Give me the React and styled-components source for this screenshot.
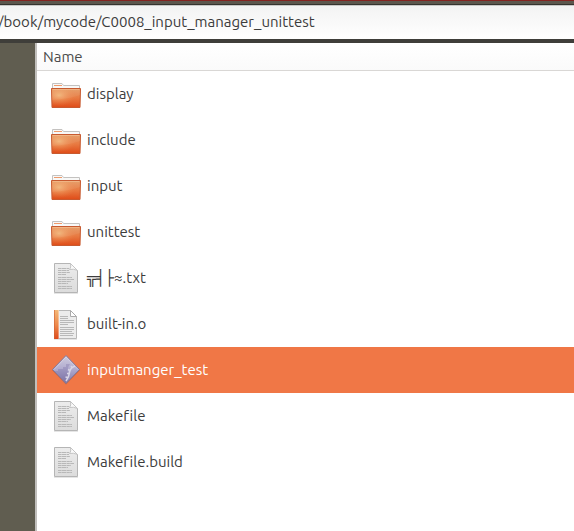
import React, { useState } from 'react';
import styled, { createGlobalStyle } from 'styled-components';

const files = [
  { name: 'display', kind: 'folder' },
  { name: 'include', kind: 'folder' },
  { name: 'input', kind: 'folder' },
  { name: 'unittest', kind: 'folder' },
  { name: '╦╡├≈.txt', kind: 'text' },
  { name: 'built-in.o', kind: 'object' },
  { name: 'inputmanger_test', kind: 'program' },
  { name: 'Makefile', kind: 'text' },
  { name: 'Makefile.build', kind: 'text' },
];

const GlobalStyle = createGlobalStyle`
  * {
    box-sizing: border-box;
  }

  body {
    margin: 0;
    background: #fff;
    color: #3c3c3c;
    font-family: 'Ubuntu', 'Noto Sans', 'DejaVu Sans', sans-serif;
    font-size: 15px;
    font-variant-ligatures: none;
  }
`;

const Window = styled.div`
  display: flex;
  flex-direction: column;
  min-height: 100vh;
`;

const TitleEdge = styled.div`
  height: 5px;
  background: linear-gradient(#84231f 0 1px, #5c574d 1px 4px, #35342f 4px);
`;

const PathBar = styled.div`
  border-bottom: 4px solid #3f3e3a;
`;

const PathInput = styled.input`
  display: block;
  width: 100%;
  height: 34px;
  padding: 0 0 2px;
  border: 0;
  border-top: 1px solid #c9c8c6;
  outline: 0;
  background: linear-gradient(#f3f3f3, #fff);
  color: inherit;
  font: inherit;
  text-indent: -2px;
`;

const Body = styled.div`
  display: flex;
  flex: 1;
`;

const Sidebar = styled.aside`
  flex: 0 0 35px;
  background: #605d50;
`;

const Content = styled.main`
  flex: 1;
  min-width: 0;
  border-left: 2px solid #c1bfbc;
`;

const Table = styled.table`
  width: 100%;
  border-spacing: 0;
`;

const HeadCell = styled.th`
  height: 28px;
  padding: 0 6px;
  border-bottom: 1px solid #d9d7d5;
  background: linear-gradient(#fff, #fafafa);
  color: #4c4c4c;
  font-weight: 400;
  text-align: left;
`;

const Row = styled.tr`
  background: ${({ $selected }) => ($selected ? '#f07746' : '#fff')};
  color: ${({ $selected }) => ($selected ? '#fff' : 'inherit')};
  cursor: default;
`;

const Cell = styled.td`
  height: 46px;
  padding: 0 13px;
`;

const Entry = styled.div`
  display: flex;
  align-items: center;
  gap: 5px;
  line-height: 20px;
  white-space: nowrap;

  svg {
    flex: none;
  }
`;

const FolderIcon = () => (
  <svg width="32" height="32" viewBox="0 0 32 32" aria-hidden="true">
    <defs>
      <linearGradient id="folder" x1="0" y1="0" x2="0" y2="1">
        <stop offset="0" stopColor="#e59a62" />
        <stop offset=".5" stopColor="#e87a42" />
        <stop offset="1" stopColor="#df4c18" />
      </linearGradient>
      <radialGradient id="folderGlow" cx=".25" cy=".35" r=".6">
        <stop offset="0" stopColor="#f6c98c" stopOpacity=".7" />
        <stop offset="1" stopColor="#f08a4c" stopOpacity="0" />
      </radialGradient>
    </defs>
    <path d="M2.500 11V5.500h9.500l1.500 2h16V11z" fill="#f8f8f7" stroke="#c4c2c0" />
    <path d="M4 7.500h8" stroke="#ee9a6c" />
    <path d="M1.500 10.500h29l-.5 19H2z" fill="url(#folder)" stroke="#c75a30" />
    <path d="M2 11h28l-.5 18H2.500z" fill="url(#folderGlow)" />
    <path d="M2.500 11.500h27" stroke="#f5c79c" strokeOpacity=".6" />
    <path d="M2 12h28v5q-10 4-28 5z" fill="#fff" fillOpacity=".06" />
  </svg>
);

const TextIcon = () => (
  <svg width="32" height="32" viewBox="0 0 32 32" aria-hidden="true">
    <defs>
      <linearGradient id="paper" x1="0" y1="0" x2="0" y2="1">
        <stop offset="0" stopColor="#ececec" />
        <stop offset="1" stopColor="#dcdcdc" />
      </linearGradient>
    </defs>
    <path d="M4 31.500h24" stroke="#000" strokeOpacity=".1" />
    <path d="M4.500 1.500h16l7 7v22h-23z" fill="url(#paper)" stroke="#b5b5b5" />
    <path d="M20.500 1.500q1 4-1 6 4-1 8 1z" fill="#fafafa" stroke="#c4c4c4" />
    <path
      d="M8 6.500h11M8 8.500h11M8 10.500h12M8 12.500h8M8 15.500h14M8 17.500h16M8 19.500h13M8 21.500h10M8 24.500h14M8 26.500h14"
      stroke="#b8b8b8"
      strokeDasharray="3 .4 5 .4"
    />
  </svg>
);

const ObjectIcon = () => (
  <svg width="32" height="32" viewBox="0 0 32 32" aria-hidden="true">
    <defs>
      <linearGradient id="spine" x1="0" y1="0" x2="0" y2="1">
        <stop offset="0" stopColor="#f3b878" />
        <stop offset=".5" stopColor="#ee8a4c" />
        <stop offset="1" stopColor="#dd4a1c" />
      </linearGradient>
    </defs>
    <path d="M4 31.500h23" stroke="#000" strokeOpacity=".1" />
    <path d="M8.500 2.500h12l6 6v22h-18z" fill="#ececec" stroke="#b8b8b8" />
    <path d="M20.500 2.500v6h6z" fill="#fff" stroke="#aaa" />
    <path d="M4 2h5v29H4z" fill="url(#spine)" />
    <path d="M4.500 2v29" stroke="#cf6235" strokeOpacity=".6" />
    <path d="M8.500 2v29" stroke="#fff" strokeOpacity=".35" />
    <path
      d="M10 8.500h8M10 10.500h8M10 12.500h14M10 14.500h14M10 16.500h8M10 19.500h14M10 21.500h14M10 23.500h12M10 25.500h14M10 27.500h13"
      stroke="#b8b8b8"
    />
  </svg>
);

const ProgramIcon = () => (
  <svg width="32" height="32" viewBox="0 0 32 32" aria-hidden="true">
    <defs>
      <linearGradient id="gem" x1="0" y1="0" x2="0" y2="1">
        <stop offset="0" stopColor="#cfccde" />
        <stop offset=".45" stopColor="#b3aed0" />
        <stop offset="1" stopColor="#8279aa" />
      </linearGradient>
      <clipPath id="gemClip">
        <path d="M16 2.500L29 15.500 16 28.500 3 15.500z" />
      </clipPath>
    </defs>
    <path d="M16 3.500L30 16 16 30.500 2 16z" fill="#8c3c28" fillOpacity=".35" />
    <path
      d="M16 1.500L29.500 15.500 16 29.500 2.500 15.500z"
      fill="url(#gem)"
      stroke="#81799d"
      strokeLinejoin="round"
    />
    <g clipPath="url(#gemClip)">
      <path d="M3 17h5v-2h5v-2h3v-3h4q-3 4-2 8t-3 11z" fill="#6a6299" fillOpacity=".28" />
      <path d="M25 12q-5 2-5.500 6.500T16 27" fill="none" stroke="#d6d3e5" strokeWidth="1.600" />
      <path
        d="M21 12l1.200 2M18 15.500l2 1M17 19.500h2.500M15.500 23l2.500.6"
        stroke="#d6d3e5"
        strokeWidth="1.600"
      />
    </g>
    <path d="M4 15.500L16 3 28 15.500" fill="none" stroke="#ebe9f2" strokeOpacity=".4" />
  </svg>
);

const icons = {
  folder: FolderIcon,
  text: TextIcon,
  object: ObjectIcon,
  program: ProgramIcon,
};

const App = () => {
  const [path, setPath] = useState('/book/mycode/C0008_input_manager_unittest');
  const [selected, setSelected] = useState('inputmanger_test');

  return (
    <Window>
      <GlobalStyle />
      <TitleEdge />
      <PathBar>
        <PathInput
          aria-label="Location"
          spellCheck={false}
          value={path}
          onChange={(e) => setPath(e.target.value)}
        />
      </PathBar>
      <Body>
        <Sidebar />
        <Content>
          <Table>
            <thead>
              <tr>
                <HeadCell scope="col">Name</HeadCell>
              </tr>
            </thead>
            <tbody>
              {files.map(({ name, kind }) => {
                const Icon = icons[kind];
                return (
                  <Row
                    key={name}
                    $selected={name === selected}
                    aria-selected={name === selected}
                    onClick={() => setSelected(name)}
                  >
                    <Cell>
                      <Entry>
                        <Icon />
                        {name}
                      </Entry>
                    </Cell>
                  </Row>
                );
              })}
            </tbody>
          </Table>
        </Content>
      </Body>
    </Window>
  );
};

export default App;
